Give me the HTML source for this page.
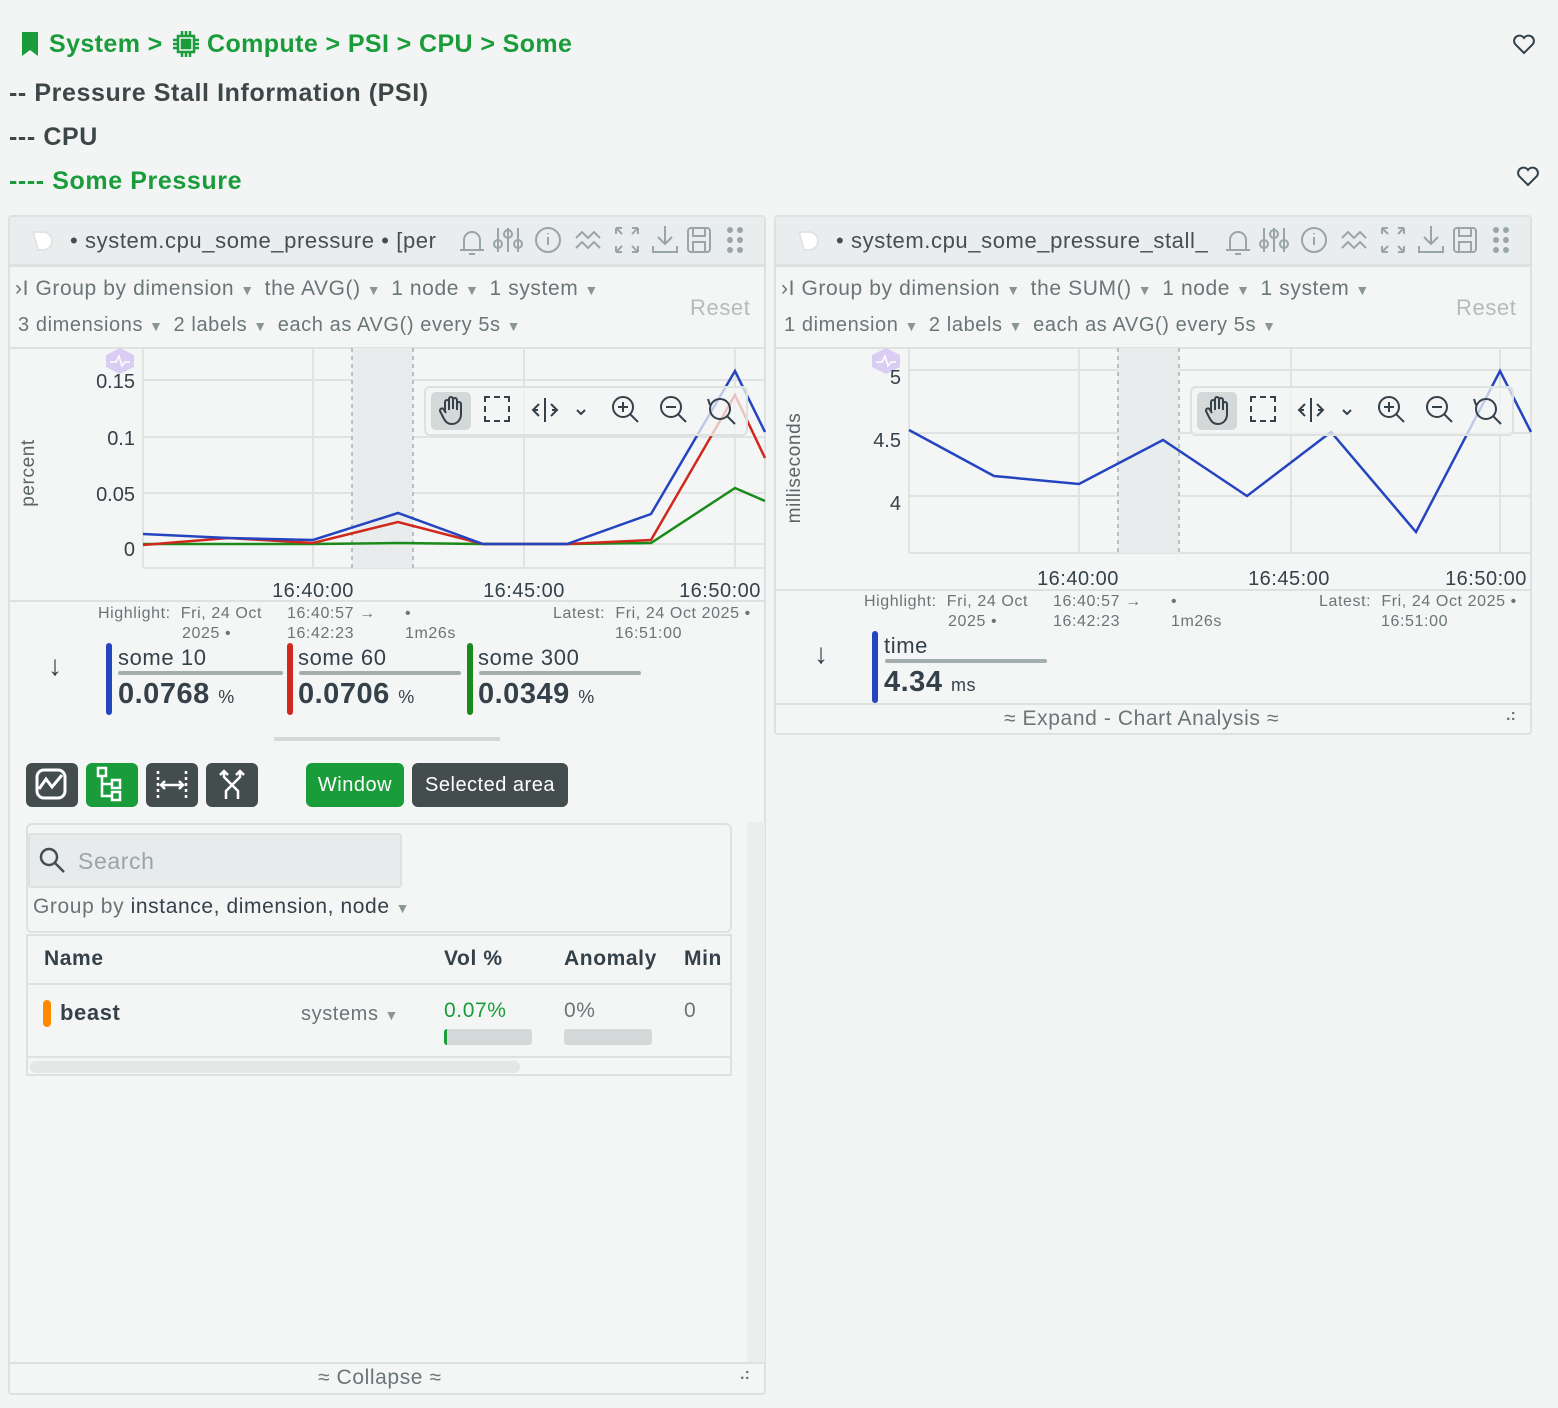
<!DOCTYPE html>
<html><head><meta charset="utf-8"><style>
*{box-sizing:border-box;margin:0;padding:0}
body{width:1558px;height:1408px;background:#f3f5f4;font-family:"Liberation Sans","DejaVu Sans",sans-serif;color:#35414a;position:relative;overflow:hidden}
.a{position:absolute;white-space:nowrap}
.g{color:#1a9c3a}
.b{font-weight:bold}
.panel{position:absolute;border:2px solid #dde2e1;border-radius:4px;background:#f4f6f5}
.hdr{position:absolute;left:0;right:0;top:0;height:50px;background:#eaeded;border-bottom:2px solid #dde2e1}
.mut{color:#6a7578}
.ls{letter-spacing:0.6px}
.chev{font-size:14px;color:#8a9597;margin:0 10px 0 6px}
.btn{position:absolute;top:763px;height:44px;border-radius:6px;background:#444d4e;color:#fff;font-size:20px;line-height:44px;text-align:center;letter-spacing:0.5px}
</style></head><body>

<!-- breadcrumb -->
<svg class="a" style="left:20px;top:30px" width="20" height="28"><path d="M2 2h16v24l-8-6-8 6z" fill="#1a9c3a"/></svg>
<div class="a g b" style="left:49px;top:30px;font-size:25px;letter-spacing:0.4px">System &gt;</div>
<svg class="a" style="left:172px;top:30px" width="28" height="28" fill="none" stroke="#1a9c3a" stroke-width="2.5"><rect x="6" y="6" width="16" height="16"/><rect x="10" y="10" width="8" height="8" fill="#1a9c3a"/><path d="M10 1v5M14 1v5M18 1v5M10 22v5M14 22v5M18 22v5M1 10h5M1 14h5M1 18h5M22 10h5M22 14h5M22 18h5"/></svg>
<div class="a g b" style="left:207px;top:30px;font-size:25px;letter-spacing:0.4px">Compute &gt; PSI &gt; CPU &gt; Some</div>
<div class="a b" style="left:9px;top:79px;font-size:25px;letter-spacing:0.6px;color:#3d4748">-- Pressure Stall Information (PSI)</div>
<div class="a b" style="left:9px;top:123px;font-size:25px;letter-spacing:0.6px;color:#3d4748">--- CPU</div>
<div class="a g b" style="left:9px;top:167px;font-size:25px;letter-spacing:0.6px">---- Some Pressure</div>
<svg class="a" style="left:1512px;top:33px" width="24" height="22" fill="none" stroke="#35414a" stroke-width="2"><path d="M12 20L3 11a5 5 0 0 1 9-6a5 5 0 0 1 9 6z"/></svg>
<svg class="a" style="left:1516px;top:165px" width="24" height="22" fill="none" stroke="#35414a" stroke-width="2"><path d="M12 20L3 11a5 5 0 0 1 9-6a5 5 0 0 1 9 6z"/></svg>

<!-- LEFT PANEL -->
<div class="panel" style="left:8px;top:215px;width:758px;height:1180px">
 <div class="hdr"></div>
</div>
<div class="a ls" style="left:70px;top:228px;font-size:22px;color:#44504f">• system.cpu_some_pressure • [per</div>
<div class="a" style="left:9px;top:264px;width:756px;height:2px;background:#dde2e1"></div>
<div class="a mut ls" style="left:15px;top:277px;font-size:21px">›I Group by dimension<span class="chev">▼</span>the AVG()<span class="chev">▼</span>1 node<span class="chev">▼</span>1 system<span class="chev">▼</span></div>
<div class="a mut ls" style="left:18px;top:314px;font-size:20px">3 dimensions<span class="chev">▼</span>2 labels<span class="chev">▼</span>each as AVG() every 5s<span class="chev">▼</span></div>
<div class="a ls" style="left:690px;top:295px;font-size:22px;color:#b3bcbd">Reset</div>
<div class="a" style="left:9px;top:347px;width:756px;height:2px;background:#dde2e1"></div>

<svg class="a" style="left:0;top:340px" width="770" height="270">
 <g stroke="#dfe4e3" stroke-width="2">
  <line x1="143" y1="40" x2="765" y2="40"/><line x1="143" y1="97" x2="765" y2="97"/><line x1="143" y1="153" x2="765" y2="153"/><line x1="143" y1="204" x2="765" y2="204"/>
  <line x1="143" y1="8" x2="143" y2="228"/><line x1="313" y1="8" x2="313" y2="228"/><line x1="524" y1="8" x2="524" y2="228"/><line x1="735" y1="8" x2="735" y2="228"/>
  <line x1="143" y1="228" x2="765" y2="228"/>
 </g>
 <rect x="352" y="8" width="61" height="220" fill="#e8ecec"/>
 <line x1="352" y1="8" x2="352" y2="228" stroke="#b8c0c0" stroke-dasharray="4 4" stroke-width="2"/>
 <line x1="413" y1="8" x2="413" y2="228" stroke="#b8c0c0" stroke-dasharray="4 4" stroke-width="2"/>
 <polyline fill="none" stroke="#1a8a1a" stroke-width="2.5" points="143,204 313,204 398,203 483,204 567,204 651,203 735,148 765,161"/>
 <polyline fill="none" stroke="#d0281c" stroke-width="2.5" points="143,205 228,198 313,203 398,182 483,204 567,204 651,200 735,55 765,118"/>
 <polyline fill="none" stroke="#2545c0" stroke-width="2.5" points="143,194 228,198 313,200 398,173 483,204 567,204 651,174 735,31 765,92"/>
 <path d="M120 8l14 7v12l-14 7l-14-7v-12z" fill="#d9cdf4"/>
 <path d="M110 22h6l3-6 3 10 3-4h5" fill="none" stroke="#fff" stroke-width="1.5"/>
 <g font-size="20" fill="#35414a" text-anchor="end"><text x="135" y="48">0.15</text><text x="135" y="105">0.1</text><text x="135" y="161">0.05</text><text x="135" y="216">0</text></g>
 <g font-size="20" fill="#35414a" text-anchor="middle" letter-spacing="0.5"><text x="313" y="257">16:40:00</text><text x="524" y="257">16:45:00</text><text x="720" y="257">16:50:00</text></g>
 <text transform="translate(34,133) rotate(-90)" font-size="19" fill="#5a6567" text-anchor="middle" letter-spacing="0.6">percent</text>
</svg>
<!-- overlay toolbar left -->
<div class="a" style="left:424px;top:386px;width:324px;height:50px;border:2px solid #dde2e1;border-radius:6px;background:rgba(244,246,245,0.75)"></div>
<div class="a" style="left:431px;top:392px;width:40px;height:38px;border-radius:5px;background:#d3d9d8"></div>
<svg class="a" style="left:438px;top:396px" width="26" height="30" fill="none" stroke="#35414a" stroke-width="2"><path d="M7 16V6a2 2 0 0 1 4 0v8M11 13V3a2 2 0 0 1 4 0v10M15 13V4a2 2 0 0 1 4 0v10M19 14V8a2 2 0 0 1 4 0v10c0 6-4 10-9 10s-7-3-9-7l-3-6a2 2 0 0 1 4-1l2 3"/></svg>
<div class="a" style="left:484px;top:396px;width:26px;height:26px;border:2px dashed #35414a"></div>
<svg class="a" style="left:531px;top:396px" width="60" height="28" fill="none" stroke="#35414a" stroke-width="2"><path d="M14 2v24M8 8l-6 6 6 6M20 8l6 6-6 6M2 14h5M21 14h5M46 14l4 4 4-4"/></svg>
<svg class="a" style="left:610px;top:395px" width="130" height="32" fill="none" stroke="#35414a" stroke-width="2"><circle cx="13" cy="12" r="10"/><path d="M20 19l8 8M8 12h10M13 7v10"/><circle cx="61" cy="12" r="10"/><path d="M68 19l8 8M56 12h10"/><circle cx="110" cy="14" r="10"/><path d="M117 21l8 8M100 10l-2-6"/></svg>

<!-- left header icons -->
<svg class="a" style="left:454px;top:224px" width="300" height="32" fill="none" stroke="#9aa5a7" stroke-width="2">
 <path d="M6 26h24M10 26v-10a8 8 0 0 1 16 0v10M15 30h6"/>
 <path d="M44 4v24M54 4v24M64 4v24"/><circle cx="44" cy="20" r="4"/><circle cx="54" cy="10" r="4"/><circle cx="64" cy="20" r="4"/>
 <circle cx="94" cy="16" r="12"/><path d="M94 13v8M94 9v1"/>
 <path d="M122 14l6-6 6 6 6-6 6 6M122 24l6-6 6 6 6-6 6 6"/>
 <path d="M162 4l6 6M162 4v6M162 4h6M184 4l-6 6M184 4v6M184 4h-6M162 28l6-6M162 28v-6M162 28h6M184 28l-6-6M184 28v-6M184 28h-6"/>
 <path d="M211 2v18M204 13l7 7 7-7M199 22v6h24v-6"/>
 <rect x="234" y="4" width="22" height="24" rx="3"/><rect x="239" y="4" width="12" height="8"/><rect x="239" y="18" width="12" height="10"/>
 <g fill="#9aa5a7" stroke="none"><circle cx="276" cy="6" r="3"/><circle cx="286" cy="6" r="3"/><circle cx="276" cy="16" r="3"/><circle cx="286" cy="16" r="3"/><circle cx="276" cy="26" r="3"/><circle cx="286" cy="26" r="3"/></g>
</svg>
<svg class="a" style="left:30px;top:228px" width="26" height="26"><path d="M3 4h10a9 9 0 0 1 0 18H8z" fill="#fff" stroke="#e0e4e4" stroke-width="2"/></svg>

<div class="a" style="left:9px;top:600px;width:756px;height:2px;background:#dde2e1"></div>
<div class="a mut ls" style="left:98px;top:604px;font-size:16px;line-height:20px">Highlight:&nbsp; Fri, 24 Oct<br><span style="padding-left:84px">2025 •</span></div>
<div class="a mut ls" style="left:287px;top:604px;font-size:16px;line-height:20px">16:40:57 →<br>16:42:23</div>
<div class="a mut ls" style="left:405px;top:604px;font-size:16px;line-height:20px">•<br>1m26s</div>
<div class="a mut ls" style="left:553px;top:604px;font-size:16px;line-height:20px">Latest:&nbsp; Fri, 24 Oct 2025 •<br><span style="padding-left:62px">16:51:00</span></div>
<div class="a" style="left:48px;top:650px;font-size:28px">↓</div>
<div class="a" style="left:106px;top:643px;width:6px;height:72px;border-radius:3px;background:#2545c0"></div>
<div class="a" style="left:287px;top:643px;width:6px;height:72px;border-radius:3px;background:#d0281c"></div>
<div class="a" style="left:467px;top:643px;width:6px;height:72px;border-radius:3px;background:#1a8a1a"></div>
<div class="a ls" style="left:118px;top:645px;font-size:22px">some 10</div>
<div class="a ls" style="left:298px;top:645px;font-size:22px">some 60</div>
<div class="a ls" style="left:478px;top:645px;font-size:22px">some 300</div>
<div class="a" style="left:118px;top:671px;width:165px;height:4px;background:#a5aeae;border-radius:2px"></div>
<div class="a" style="left:299px;top:671px;width:162px;height:4px;background:#a5aeae;border-radius:2px"></div>
<div class="a" style="left:479px;top:671px;width:162px;height:4px;background:#a5aeae;border-radius:2px"></div>
<div class="a b" style="left:118px;top:678px;font-size:29px;letter-spacing:0.5px">0.0768 <span style="font-size:18px;font-weight:normal">%</span></div>
<div class="a b" style="left:298px;top:678px;font-size:29px;letter-spacing:0.5px">0.0706 <span style="font-size:18px;font-weight:normal">%</span></div>
<div class="a b" style="left:478px;top:678px;font-size:29px;letter-spacing:0.5px">0.0349 <span style="font-size:18px;font-weight:normal">%</span></div>
<div class="a" style="left:274px;top:737px;width:226px;height:4px;background:#d3d9d8"></div>

<div class="btn" style="left:26px;width:52px"><svg width="52" height="44" fill="none" stroke="#fff" stroke-width="3"><rect x="11" y="7" width="28" height="28" rx="7"/><path d="M13 26l7-10 6 8 10-12"/></svg></div>
<div class="btn" style="left:86px;width:52px;background:#1a9c3a"><svg width="52" height="44" fill="none" stroke="#fff" stroke-width="2.5"><rect x="12" y="5" width="8" height="8"/><rect x="26" y="17" width="8" height="8"/><rect x="26" y="29" width="8" height="8"/><path d="M16 13v20h10M16 21h10"/></svg></div>
<div class="btn" style="left:146px;width:52px"><svg width="52" height="44" fill="none" stroke="#fff" stroke-width="2.5"><path d="M12 8v28M40 8v28" stroke-dasharray="3 3"/><path d="M15 22h22M19 18l-4 4 4 4M33 18l4 4-4 4"/></svg></div>
<div class="btn" style="left:206px;width:52px"><svg width="52" height="44" fill="none" stroke="#fff" stroke-width="2.5"><path d="M18 8v6l14 14v8M34 8v6l-14 14v8M14 12l4-4 4 4M30 12l4-4 4 4"/></svg></div>
<div class="btn" style="left:306px;width:98px;background:#1a9c3a">Window</div>
<div class="btn" style="left:412px;width:156px">Selected area</div>

<div class="a" style="left:747px;top:822px;width:18px;height:540px;background:#eceeee"></div>
<div class="a" style="left:26px;top:823px;width:706px;height:110px;border:2px solid #dde2e1;border-radius:6px"></div>
<div class="a" style="left:28px;top:833px;width:374px;height:55px;background:#e8ebeb;border:2px solid #dde2e1;border-radius:3px"></div>
<svg class="a" style="left:38px;top:846px" width="30" height="30" fill="none" stroke="#44504f" stroke-width="2.5"><circle cx="11" cy="11" r="8"/><path d="M17 17l9 9"/></svg>
<div class="a ls" style="left:78px;top:848px;font-size:23px;color:#9aa5a7">Search</div>
<div class="a mut ls" style="left:33px;top:895px;font-size:21px">Group by <span style="color:#35414a">instance, dimension, node</span><span class="chev">▼</span></div>
<div class="a" style="left:26px;top:934px;width:706px;height:142px;border:2px solid #dde2e1"></div>
<div class="a" style="left:27px;top:983px;width:704px;height:2px;background:#dde2e1"></div>
<div class="a" style="left:27px;top:1056px;width:704px;height:2px;background:#dde2e1"></div>
<div class="a" style="left:30px;top:1061px;width:490px;height:12px;border-radius:6px;background:#e3e7e6"></div>
<div class="a b ls" style="left:44px;top:947px;font-size:21px">Name</div>
<div class="a b ls" style="left:444px;top:947px;font-size:21px">Vol %</div>
<div class="a b ls" style="left:564px;top:947px;font-size:21px">Anomaly</div>
<div class="a b ls" style="left:684px;top:947px;font-size:21px">Min</div>
<div class="a" style="left:43px;top:1000px;width:8px;height:27px;border-radius:4px;background:#ff8a00"></div>
<div class="a b ls" style="left:60px;top:1000px;font-size:22px">beast</div>
<div class="a mut ls" style="left:301px;top:1003px;font-size:20px">systems<span class="chev">▼</span></div>
<div class="a g ls" style="left:444px;top:999px;font-size:21px">0.07%</div>
<div class="a mut ls" style="left:564px;top:999px;font-size:21px">0%</div>
<div class="a mut" style="left:684px;top:999px;font-size:21px">0</div>
<div class="a" style="left:444px;top:1029px;width:88px;height:16px;border-radius:3px;background:#d3d9d8;border-left:3px solid #1a9c3a"></div>
<div class="a" style="left:564px;top:1029px;width:88px;height:16px;border-radius:3px;background:#d3d9d8"></div>
<div class="a" style="left:9px;top:1362px;width:756px;height:2px;background:#dde2e1"></div>
<div class="a mut ls" style="left:318px;top:1366px;font-size:21px">≈ Collapse ≈</div>
<div class="a mut" style="left:740px;top:1366px;font-size:16px;font-weight:bold">.:</div>

<!-- RIGHT PANEL -->
<div class="panel" style="left:774px;top:215px;width:758px;height:520px">
 <div class="hdr"></div>
</div>
<svg class="a" style="left:796px;top:228px" width="26" height="26"><path d="M3 4h10a9 9 0 0 1 0 18H8z" fill="#fff" stroke="#e0e4e4" stroke-width="2"/></svg>
<div class="a ls" style="left:836px;top:228px;font-size:22px;color:#44504f">• system.cpu_some_pressure_stall_</div>
<svg class="a" style="left:1220px;top:224px" width="300" height="32" fill="none" stroke="#9aa5a7" stroke-width="2">
 <path d="M6 26h24M10 26v-10a8 8 0 0 1 16 0v10M15 30h6"/>
 <path d="M44 4v24M54 4v24M64 4v24"/><circle cx="44" cy="20" r="4"/><circle cx="54" cy="10" r="4"/><circle cx="64" cy="20" r="4"/>
 <circle cx="94" cy="16" r="12"/><path d="M94 13v8M94 9v1"/>
 <path d="M122 14l6-6 6 6 6-6 6 6M122 24l6-6 6 6 6-6 6 6"/>
 <path d="M162 4l6 6M162 4v6M162 4h6M184 4l-6 6M184 4v6M184 4h-6M162 28l6-6M162 28v-6M162 28h6M184 28l-6-6M184 28v-6M184 28h-6"/>
 <path d="M211 2v18M204 13l7 7 7-7M199 22v6h24v-6"/>
 <rect x="234" y="4" width="22" height="24" rx="3"/><rect x="239" y="4" width="12" height="8"/><rect x="239" y="18" width="12" height="10"/>
 <g fill="#9aa5a7" stroke="none"><circle cx="276" cy="6" r="3"/><circle cx="286" cy="6" r="3"/><circle cx="276" cy="16" r="3"/><circle cx="286" cy="16" r="3"/><circle cx="276" cy="26" r="3"/><circle cx="286" cy="26" r="3"/></g>
</svg>
<div class="a" style="left:775px;top:264px;width:756px;height:2px;background:#dde2e1"></div>
<div class="a mut ls" style="left:781px;top:277px;font-size:21px">›I Group by dimension<span class="chev">▼</span>the SUM()<span class="chev">▼</span>1 node<span class="chev">▼</span>1 system<span class="chev">▼</span></div>
<div class="a mut ls" style="left:784px;top:314px;font-size:20px">1 dimension<span class="chev">▼</span>2 labels<span class="chev">▼</span>each as AVG() every 5s<span class="chev">▼</span></div>
<div class="a ls" style="left:1456px;top:295px;font-size:22px;color:#b3bcbd">Reset</div>
<div class="a" style="left:775px;top:347px;width:756px;height:2px;background:#dde2e1"></div>
<svg class="a" style="left:766px;top:340px" width="770" height="250">
 <g stroke="#dfe4e3" stroke-width="2">
  <line x1="143" y1="30" x2="765" y2="30"/><line x1="143" y1="93" x2="765" y2="93"/><line x1="143" y1="156" x2="765" y2="156"/>
  <line x1="143" y1="8" x2="143" y2="213"/><line x1="313" y1="8" x2="313" y2="213"/><line x1="525" y1="8" x2="525" y2="213"/><line x1="734" y1="8" x2="734" y2="213"/>
  <line x1="143" y1="213" x2="765" y2="213"/>
 </g>
 <rect x="352" y="8" width="61" height="205" fill="#e8ecec"/>
 <line x1="352" y1="8" x2="352" y2="213" stroke="#b8c0c0" stroke-dasharray="4 4" stroke-width="2"/>
 <line x1="413" y1="8" x2="413" y2="213" stroke="#b8c0c0" stroke-dasharray="4 4" stroke-width="2"/>
 <polyline fill="none" stroke="#2545c0" stroke-width="2.5" points="143,90 228,136 313,144 397,100 481,156 565,92 650,192 734,31 765,92"/>
 <path d="M120 8l14 7v12l-14 7l-14-7v-12z" fill="#d9cdf4"/>
 <path d="M110 22h6l3-6 3 10 3-4h5" fill="none" stroke="#fff" stroke-width="1.5"/>
 <g font-size="20" fill="#35414a" text-anchor="end"><text x="135" y="44">5</text><text x="135" y="107">4.5</text><text x="135" y="170">4</text></g>
 <g font-size="20" fill="#35414a" text-anchor="middle" letter-spacing="0.5"><text x="312" y="245">16:40:00</text><text x="523" y="245">16:45:00</text><text x="720" y="245">16:50:00</text></g>
 <text transform="translate(34,128) rotate(-90)" font-size="19" fill="#5a6567" text-anchor="middle" letter-spacing="0.6">milliseconds</text>
</svg>
<div class="a" style="left:1190px;top:386px;width:324px;height:50px;border:2px solid #dde2e1;border-radius:6px;background:rgba(244,246,245,0.75)"></div>
<div class="a" style="left:1197px;top:392px;width:40px;height:38px;border-radius:5px;background:#d3d9d8"></div>
<svg class="a" style="left:1204px;top:396px" width="26" height="30" fill="none" stroke="#35414a" stroke-width="2"><path d="M7 16V6a2 2 0 0 1 4 0v8M11 13V3a2 2 0 0 1 4 0v10M15 13V4a2 2 0 0 1 4 0v10M19 14V8a2 2 0 0 1 4 0v10c0 6-4 10-9 10s-7-3-9-7l-3-6a2 2 0 0 1 4-1l2 3"/></svg>
<div class="a" style="left:1250px;top:396px;width:26px;height:26px;border:2px dashed #35414a"></div>
<svg class="a" style="left:1297px;top:396px" width="60" height="28" fill="none" stroke="#35414a" stroke-width="2"><path d="M14 2v24M8 8l-6 6 6 6M20 8l6 6-6 6M2 14h5M21 14h5M46 14l4 4 4-4"/></svg>
<svg class="a" style="left:1376px;top:395px" width="130" height="32" fill="none" stroke="#35414a" stroke-width="2"><circle cx="13" cy="12" r="10"/><path d="M20 19l8 8M8 12h10M13 7v10"/><circle cx="61" cy="12" r="10"/><path d="M68 19l8 8M56 12h10"/><circle cx="110" cy="14" r="10"/><path d="M117 21l8 8M100 10l-2-6"/></svg>
<div class="a" style="left:775px;top:589px;width:756px;height:2px;background:#dde2e1"></div>
<div class="a mut ls" style="left:864px;top:592px;font-size:16px;line-height:20px">Highlight:&nbsp; Fri, 24 Oct<br><span style="padding-left:84px">2025 •</span></div>
<div class="a mut ls" style="left:1053px;top:592px;font-size:16px;line-height:20px">16:40:57 →<br>16:42:23</div>
<div class="a mut ls" style="left:1171px;top:592px;font-size:16px;line-height:20px">•<br>1m26s</div>
<div class="a mut ls" style="left:1319px;top:592px;font-size:16px;line-height:20px">Latest:&nbsp; Fri, 24 Oct 2025 •<br><span style="padding-left:62px">16:51:00</span></div>
<div class="a" style="left:814px;top:638px;font-size:28px">↓</div>
<div class="a" style="left:872px;top:631px;width:6px;height:72px;border-radius:3px;background:#2545c0"></div>
<div class="a ls" style="left:884px;top:633px;font-size:22px">time</div>
<div class="a" style="left:885px;top:659px;width:162px;height:4px;background:#a5aeae;border-radius:2px"></div>
<div class="a b" style="left:884px;top:666px;font-size:29px;letter-spacing:0.5px">4.34 <span style="font-size:18px;font-weight:normal">ms</span></div>
<div class="a" style="left:775px;top:703px;width:756px;height:2px;background:#dde2e1"></div>
<div class="a mut ls" style="left:1004px;top:707px;font-size:21px">≈ Expand - Chart Analysis ≈</div>
<div class="a mut" style="left:1506px;top:707px;font-size:16px;font-weight:bold">.:</div>
</body></html>
